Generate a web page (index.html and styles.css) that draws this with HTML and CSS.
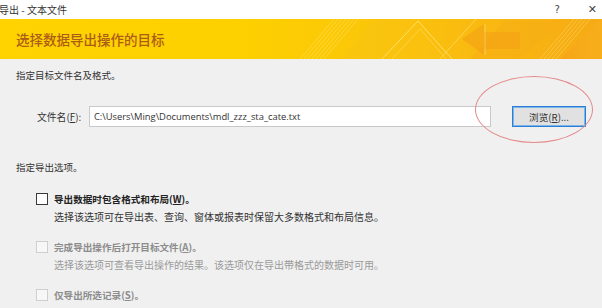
FILE: index.html
```html
<!DOCTYPE html>
<html lang="zh-CN">
<head>
<meta charset="utf-8">
<title>导出 - 文本文件</title>
<link rel="stylesheet" href="styles.css">
</head>
<body>
<div class="titlebar">
  <span class="title">导出 - 文本文件</span>
  <span class="controls"><span class="help">?</span><span class="close">✕</span></span>
</div>
<div class="banner">
  <svg class="banner-art" width="602" height="40" viewBox="0 0 602 40" aria-hidden="true">
    <defs>
      <linearGradient id="org" x1="0" x2="1" y1="0" y2="0">
        <stop offset="0" stop-color="#f6a21a" stop-opacity="0.8"/>
        <stop offset="1" stop-color="#f8b11e" stop-opacity="0.5"/>
      </linearGradient>
    </defs>
    <g stroke="#fff3a0" stroke-opacity="0.4" stroke-width="0.8">
      <line x1="300" y1="40" x2="334" y2="0"/>
      <line x1="304" y1="40" x2="338" y2="0"/>
      <line x1="308" y1="40" x2="342" y2="0"/>
      <line x1="312" y1="40" x2="346" y2="0"/>
      <line x1="316" y1="40" x2="350" y2="0"/>
      <line x1="320" y1="40" x2="354" y2="0"/>
      <line x1="324" y1="40" x2="358" y2="0"/>
      <line x1="540" y1="40" x2="574" y2="0"/>
      <line x1="544" y1="40" x2="578" y2="0"/>
      <line x1="548" y1="40" x2="582" y2="0"/>
      <line x1="552" y1="40" x2="586" y2="0"/>
      <line x1="556" y1="40" x2="590" y2="0"/>
    </g>
    <polygon points="340,40 376,0 420,0 440,40" fill="#f9c313" fill-opacity="0.4"/>
    <polyline points="382,40 418,2 452,40" fill="none" stroke="#fff0a0" stroke-opacity="0.7" stroke-width="0.9"/>
    <polyline points="392,40 420,10 446,40" fill="none" stroke="#fff0a0" stroke-opacity="0.45" stroke-width="0.8"/>
    <polygon points="470,40 505,2 560,2 520,40" fill="#f7ac17" fill-opacity="0.45"/>
    <polygon points="462,20 484,5 484,13 520,13 520,30 484,30 484,36" fill="#f4a016" fill-opacity="0.6"/>
    <line x1="485" y1="5" x2="485" y2="36" stroke="#fff0a0" stroke-opacity="0.5" stroke-width="0.8"/>
    <line x1="440" y1="40" x2="476" y2="0" stroke="#fff3a0" stroke-opacity="0.55" stroke-width="0.8"/>
    <polygon points="560,40 600,0 602,0 602,40" fill="url(#org)"/>
  </svg>
  <h1 class="banner-title">选择数据导出操作的目标</h1>
</div>
<main class="content">
  <p class="section">指定目标文件名及格式。</p>
  <div class="file-row">
    <label class="file-label" for="fname">文件名(<u>F</u>):</label>
    <input id="fname" class="file-input" type="text" value="C:\Users\Ming\Documents\mdl_zzz_sta_cate.txt">
    <span class="browse-wrap">
      <button class="browse" type="button">浏览(<u>R</u>)...</button>
      <span class="mark" aria-hidden="true"></span>
    </span>
  </div>
  <p class="section section-2">指定导出选项。</p>
  <div class="option">
    <span class="cb"></span>
    <span class="opt-label">导出数据时包含格式和布局(<u>W</u>)。</span>
    <span class="opt-desc">选择该选项可在导出表、查询、窗体或报表时保留大多数格式和布局信息。</span>
  </div>
  <div class="option disabled">
    <span class="cb"></span>
    <span class="opt-label">完成导出操作后打开目标文件(<u>A</u>)。</span>
    <span class="opt-desc">选择该选项可查看导出操作的结果。该选项仅在导出带格式的数据时可用。</span>
  </div>
  <div class="option disabled">
    <span class="cb"></span>
    <span class="opt-label">仅导出所选记录(<u>S</u>)。</span>
  </div>
</main>
</body>
</html>
```

FILE: styles.css
```css
* { box-sizing: border-box; }
html, body {
  margin: 0;
  padding: 0;
}
body {
  width: 602px;
  height: 308px;
  overflow: hidden;
  background: #f0f0f0;
  font-family: "Noto Sans CJK SC", "Noto Sans", sans-serif;
  color: #222;
}
.titlebar {
  height: 19px;
  background: #fff;
  display: flex;
  align-items: center;
  justify-content: space-between;
  font-size: 10px;
  color: #333;
}
.title { margin-left: -1px; line-height: 12px; }
.controls {
  display: flex;
  align-items: center;
  gap: 28px;
  margin-right: 5px;
  font-family: "DejaVu Sans", sans-serif;
  font-size: 10px;
  color: #444;
}
.close { font-size: 11px; }
.banner {
  position: relative;
  height: 40px;
  overflow: hidden;
  background: linear-gradient(90deg, #fed300 0%, #fdd000 40%, #fbc60a 62%, #f9b812 82%, #f6aa14 100%);
  display: flex;
  align-items: center;
  padding-left: 16px;
}
.banner-art {
  position: absolute;
  left: 0;
  top: 0;
}
.banner-title {
  position: relative;
  margin: 0;
  font-size: 13.5px;
  font-weight: 500;
  color: #ad5c16;
  line-height: 16px;
  letter-spacing: 0;
}
.content {
  padding: 0 16px;
}
.section {
  margin: 10px 0 0;
  font-size: 9.5px;
  line-height: 12px;
  color: #333;
}
.file-row {
  margin-top: 25px;
  display: flex;
  align-items: center;
  height: 21px;
}
.file-label {
  width: 73px;
  padding-left: 21px;
  font-size: 9.8px;
  color: #333;
  white-space: nowrap;
}
.file-input {
  width: 403px;
  height: 21px;
  margin: 0;
  border: 1px solid #c9c9c9;
  background: #fff;
  padding: 0 4px;
  font-family: "Open Sans", "Liberation Sans", sans-serif;
  font-size: 9.4px;
  color: #333;
  outline: none;
}
.browse-wrap {
  position: relative;
  margin-left: 21px;
  display: flex;
}
.browse {
  width: 74px;
  height: 21px;
  margin: 0;
  padding: 0;
  border: 1px solid #2a7fd4;
  box-shadow: inset 0 0 0 1px #7db4ea;
  background: #e1e1e1;
  font-family: "Noto Sans CJK SC", sans-serif;
  font-size: 9.6px;
  color: #333;
}
.mark {
  position: absolute;
  left: -37px;
  top: -30px;
  width: 118px;
  height: 67px;
  border: 1px solid #e48a8a;
  border-radius: 50%;
  pointer-events: none;
}
.section-2 { margin-top: 34px; }
.option {
  display: grid;
  grid-template-columns: 12px 1fr;
  column-gap: 6px;
  row-gap: 6px;
  padding-left: 20px;
  margin-top: 20px;
}
.option + .option { margin-top: 18px; }
.cb {
  width: 12px;
  height: 12px;
  border: 1px solid #3a3a3a;
  background: #fff;
}
.opt-label {
  font-size: 9.6px;
  line-height: 12px;
  font-weight: 700;
  color: #222;
  white-space: nowrap;
}
.opt-desc {
  grid-column: 2;
  font-size: 10px;
  line-height: 12px;
  color: #333;
  white-space: nowrap;
}
.disabled .cb { border-color: #cfcfcf; background: #f7f7f7; }
.disabled .opt-label { color: #8c8c8c; }
.disabled .opt-desc { color: #9a9a9a; }
```
